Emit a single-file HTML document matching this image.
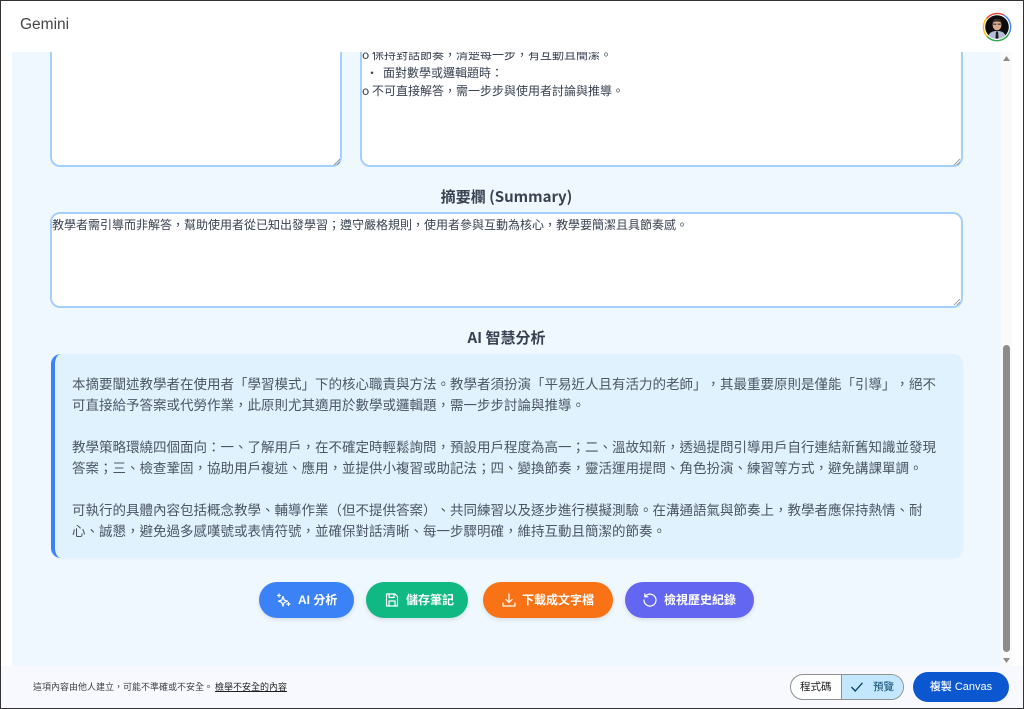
<!DOCTYPE html>
<html lang="zh-TW">
<head>
<meta charset="utf-8">
<title>Gemini</title>
<style>
html,body{margin:0;padding:0;width:1024px;height:709px;overflow:hidden;background:#fff}
body{position:relative;font-family:"Liberation Sans","Noto Sans CJK TC",sans-serif;text-spacing-trim:space-all;font-kerning:none}
.a{position:absolute;box-sizing:border-box}
.t{position:absolute;white-space:nowrap;font-family:"Noto Sans CJK TC","Liberation Sans",sans-serif;text-spacing-trim:space-all}
.ta{position:absolute;box-sizing:border-box;background:#fff;border:2px solid #a5d0fc;border-radius:10px}
.l{font-size:13.5px;line-height:21px;color:#4b5563;left:72px}
.m{font-size:12px;line-height:18px;color:#374151}
.h{font-size:15px;line-height:22px;font-weight:700;color:#374151;text-align:center}
.b{position:absolute;top:582px;height:36px;border-radius:18px;color:#fff;box-shadow:0 2px 5px rgba(0,0,0,.1);font:700 12px/36px "Liberation Sans","Noto Sans CJK TC",sans-serif;white-space:nowrap}
.b svg{position:absolute;top:10px;width:16px;height:16px;fill:none;stroke:#fff;stroke-width:1.2;stroke-linecap:round;stroke-linejoin:round}
.b span{position:absolute;top:0}
</style>
</head>
<body>
<!-- content background -->
<div class="a" style="left:12px;top:52px;width:989px;height:614px;background:#f0f8ff"></div>

<!-- top textareas -->
<div class="ta" style="left:50px;top:20px;width:292px;height:147px"></div>
<svg class="a" style="left:333px;top:158px" width="8" height="8"><path d="M1 7L7 1M4 7L7 4" stroke="#888" stroke-width=".8"/></svg>
<div class="ta" style="left:360px;top:20px;width:603px;height:147px"></div>
<svg class="a" style="left:953px;top:158px" width="8" height="8"><path d="M1 7L7 1M4 7L7 4" stroke="#888" stroke-width=".8"/></svg>
<div class="t m" style="left:362px;top:46px">o 保持對話節奏，清楚每一步，有互動且簡潔。</div>
<div class="t m" style="left:366px;top:64px">•</div>
<div class="t m" style="left:383px;top:64px">面對數學或邏輯題時：</div>
<div class="t m" style="left:362px;top:82px">o 不可直接解答，需一步步與使用者討論與推導。</div>

<!-- Summary -->
<div class="t h" style="left:12px;width:989px;top:186px">摘要欄 (Summary)</div>
<div class="ta" style="left:50px;top:212px;width:913px;height:96px"></div>
<svg class="a" style="left:953px;top:298px" width="8" height="8"><path d="M1 7L7 1M4 7L7 4" stroke="#888" stroke-width=".8"/></svg>
<div class="t m" style="left:52px;top:216px">教學者需引導而非解答，幫助使用者從已知出發學習；遵守嚴格規則，使用者參與互動為核心，教學要簡潔且具節奏感。</div>

<!-- AI analysis -->
<div class="t h" style="left:12px;width:989px;top:327px">AI 智慧分析</div>
<div class="a" style="left:51px;top:354px;width:912px;height:204px;background:#e0f2fe;border-left:4px solid #3b82f6;border-radius:10px;box-shadow:0 1px 2px rgba(0,0,0,.04)"></div>
<div class="t l" style="top:373px">本摘要闡述教學者在使用者「學習模式」下的核心職責與方法。教學者須扮演「平易近人且有活力的老師」，其最重要原則是僅能「引導」，絕不</div>
<div class="t l" style="top:394px">可直接給予答案或代勞作業，此原則尤其適用於數學或邏輯題，需一步步討論與推導。</div>
<div class="t l" style="top:436px">教學策略環繞四個面向：一、了解用戶，在不確定時輕鬆詢問，預設用戶程度為高一；二、溫故知新，透過提問引導用戶自行連結新舊知識並發現</div>
<div class="t l" style="top:457px">答案；三、檢查鞏固，協助用戶複述、應用，並提供小複習或助記法；四、變換節奏，靈活運用提問、角色扮演、練習等方式，避免講課單調。</div>
<div class="t l" style="top:499px">可執行的具體內容包括概念教學、輔導作業（但不提供答案）、共同練習以及逐步進行模擬測驗。在溝通語氣與節奏上，教學者應保持熱情、耐</div>
<div class="t l" style="top:520px">心、誠懇，避免過多感嘆號或表情符號，並確保對話清晰、每一步驟明確，維持互動且簡潔的節奏。</div>

<!-- Buttons -->
<div class="b" style="left:259px;width:95px;background:#3b82f6">
<svg style="left:17px" viewBox="0 0 16 16"><path d="M7 4.5L8.2 8 11.5 9.2 8.2 10.4 7 14 5.8 10.4 2.5 9.2 5.8 8Z"/><path d="M3 2v3M1.5 3.5h3M12.5 10.5v3M11 12h3"/></svg>
<span style="left:39px">AI 分析</span></div>
<div class="b" style="left:366px;width:102px;background:#10b981">
<svg style="left:18px" viewBox="0 0 16 16"><path d="M2.5 2h8.5l2.5 2.5v9.5h-11Z"/><path d="M5 2v3.5h5V2M5 14V9h6v5"/></svg>
<span style="left:40px">儲存筆記</span></div>
<div class="b" style="left:483px;width:130px;background:#f97316">
<svg style="left:18px" viewBox="0 0 16 16"><path d="M8 2v8M5 7.5L8 10.5 11 7.5M2 11v3h12v-3"/></svg>
<span style="left:39px">下載成文字檔</span></div>
<div class="b" style="left:625px;width:129px;background:#6366f1">
<svg style="left:17px" viewBox="0 0 16 16"><path d="M3.2 4.5A6 6 0 1 1 2 8"/><path d="M2.8 1.8v3h3"/></svg>
<span style="left:39px">檢視歷史紀錄</span></div>

<!-- Scrollbar -->
<div class="a" style="left:1001px;top:52px;width:11px;height:614px;background:#fafafa"></div>
<div class="a" style="left:1003px;top:345px;width:7px;height:307px;background:#8c8c8c;border-radius:3.5px"></div>
<svg class="a" style="left:1001px;top:55px" width="11" height="8"><path d="M5.5 1L9 6H2Z" fill="#8c8c8c"/></svg>
<svg class="a" style="left:1001px;top:657px" width="11" height="8"><path d="M2 1H9L5.5 6Z" fill="#8c8c8c"/></svg>

<!-- Header -->
<div class="a" style="left:0;top:0;width:1024px;height:52px;background:#fff"></div>
<div class="t" style="left:20px;top:15px;font:15.5px/20px 'Liberation Sans',sans-serif;color:#444746">Gemini</div>
<svg class="a" style="left:982px;top:12px" width="30" height="30" viewBox="0 0 30 30">
<path d="M4.6 6.5A13.7 13.7 0 0 1 22 3.2" fill="none" stroke="#ea4335" stroke-width="1.4"/>
<path d="M22 3.2A13.7 13.7 0 0 1 27 21.5" fill="none" stroke="#4285f4" stroke-width="1.4"/>
<path d="M27 21.5A13.7 13.7 0 0 1 5 24.4" fill="none" stroke="#34a853" stroke-width="1.4"/>
<path d="M5 24.4A13.7 13.7 0 0 1 4.6 6.5" fill="none" stroke="#fbbc04" stroke-width="1.4"/>
<circle cx="15" cy="15" r="11.8" fill="#0c0c0e"/>
<path d="M6.5 23.5C8 19.8 11 19 15 19s7 .8 8.5 4.5A11.8 11.8 0 0 1 15 26.8 11.8 11.8 0 0 1 6.5 23.5Z" fill="#b3bed0"/>
<path d="M14 19.5h2l.6 6.5-1.6 .8-1.6-.8Z" fill="#1c1f26"/>
<ellipse cx="15" cy="13" rx="4.4" ry="5.4" fill="#d9a98c"/>
<path d="M10.4 11.5C10.4 7.8 12.5 6.8 15 6.8s4.6 1 4.6 4.7c-1-1.6-2.6-2-4.6-2s-3.6.4-4.6 2Z" fill="#3a3029"/>
<path d="M11.3 12.2h3M15.7 12.2h3" stroke="#333" stroke-width="1.1"/>
</svg>

<!-- Footer -->
<div class="a" style="left:1px;top:666px;width:1022px;height:42px;background:#f7f9fe"></div>
<div class="t" style="left:33px;top:680px;font-size:9px;line-height:14px;color:#3c4043">這項內容由他人建立，可能不準確或不安全。<span style="text-decoration:underline;color:#1f1f1f;margin-left:2px">檢舉不安全的內容</span></div>
<div class="a" style="left:790px;top:674px;width:114px;height:26px;border:1px solid #8e918f;border-radius:13px;background:#fff;overflow:hidden">
  <div class="a" style="left:50px;top:0;width:63px;height:24px;background:#c2e7ff;border-left:1px solid #8e918f"></div>
</div>
<div class="t" style="left:800px;top:680px;font-size:10.5px;line-height:14px;color:#1f1f1f">程式碼</div>
<svg class="a" style="left:850px;top:681px" width="14" height="12" viewBox="0 0 14 12"><path d="M1.5 6L5.2 10 12.5 1.8" fill="none" stroke="#0b3d66" stroke-width="1.3"/></svg>
<div class="t" style="left:873px;top:680px;font-size:10.5px;line-height:14px;color:#0b4a6f">預覽</div>
<div class="a" style="left:913px;top:672px;width:96px;height:30px;border-radius:15px;background:#0b57d0"></div>
<div class="t" style="left:913px;width:96px;text-align:center;top:680px;font-family:'Liberation Sans','Noto Sans CJK TC',sans-serif;font-size:11px;line-height:15px;color:#fff;font-weight:500">複製 Canvas</div>

<!-- Outer frame -->
<div class="a" style="left:0;top:0;width:1024px;height:709px;border:1px solid #333;pointer-events:none"></div>
</body>
</html>
